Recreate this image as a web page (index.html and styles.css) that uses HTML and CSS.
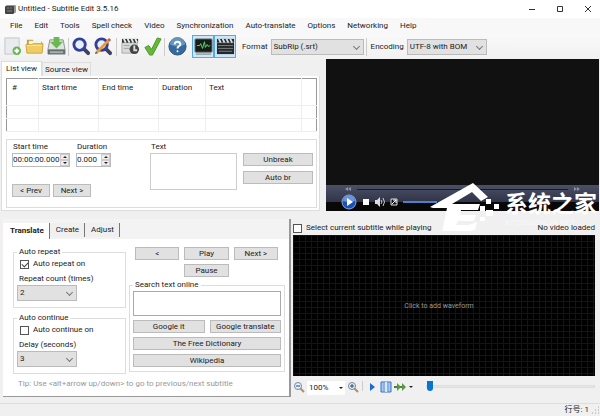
FILE: index.html
```html
<!DOCTYPE html>
<html lang="en">
<head>
  <meta charset="UTF-8" />
  <meta name="viewport" content="width=device-width, initial-scale=1" />
  <title>Untitled - Subtitle Edit 3.5.16</title>
  <link rel="stylesheet" href="styles.css">
</head>
<body>
  <header class="titlebar">
    <svg class="app-icon" viewBox="0 0 11 11"><rect x="1" y="1" width="10" height="8" rx="1" fill="#999"/><rect x="0" y="2" width="9" height="8" rx="1" fill="#444"/><path d="M2 4h2M5 4h2M2 7h5" stroke="#888"/></svg>
    <h1>Untitled - Subtitle Edit 3.5.16</h1>
    <div class="window-buttons">
      <button aria-label="Minimize"><svg viewBox="0 0 8 8"><path d="M1 4.5h6" /></svg></button>
      <button aria-label="Maximize"><svg viewBox="0 0 8 8"><path d="M1.5 1.5h5v5h-5z" /></svg></button>
      <button aria-label="Close"><svg viewBox="0 0 8 8"><path d="M1 1l6 6M7 1l-6 6" /></svg></button>
    </div>
  </header>

  <nav class="menu">
    <a href="#">File</a>
    <a href="#">Edit</a>
    <a href="#">Tools</a>
    <a href="#">Spell check</a>
    <a href="#">Video</a>
    <a href="#">Synchronization</a>
    <a href="#">Auto-translate</a>
    <a href="#">Options</a>
    <a href="#">Networking</a>
    <a href="#">Help</a>
  </nav>

  <div class="toolbar">
    <button class="tool" aria-label="New">
      <svg viewBox="0 0 20 20"><path d="M2 1h15v17H2z" fill="#e9ebee" stroke="#c3c6ca"/><circle cx="14.500" cy="14.500" r="4.500" fill="#65b651"/><path d="M14.500 12v5M12 14.500h5" stroke="#fff" stroke-width="2"/></svg>
    </button>
    <button class="tool" aria-label="Open">
      <svg viewBox="0 0 20 20"><path d="M2 16V3h6l2 2h8v11z" fill="#c89b3c"/><path d="M4 4h13v8H4z" fill="#f5f3e8"/><path d="M1 8h6l2-1h10l-1 10H2z" fill="#f0cd64" stroke="#cfa33f"/><path d="M2 9h15" stroke="#faeaa8"/></svg>
    </button>
    <button class="tool" aria-label="Save">
      <svg viewBox="0 0 20 20"><path d="M3 3h14l2 10v5H1v-5z" fill="#dfe3e2" stroke="#8d9292"/><path d="M1 13h18v5H1z" fill="#667072"/><path d="M3 15h14v2H3z" fill="#a8b1b1"/><path d="M7 0h6v5h4l-7 7-7-7h4z" fill="#67bb4c"/></svg>
    </button>
    <span class="divider"></span>
    <button class="tool" aria-label="Find">
      <svg viewBox="0 0 20 20"><path d="M12 12l5 5" stroke="#40405f" stroke-width="4" stroke-linecap="round"/><circle cx="8" cy="8" r="6" fill="#e7effc" stroke="#333f99" stroke-width="3"/></svg>
    </button>
    <button class="tool" aria-label="Replace">
      <svg viewBox="0 0 20 20"><path d="M12 12l5 5" stroke="#40405f" stroke-width="4" stroke-linecap="round"/><circle cx="8" cy="8" r="6" fill="#e7effc" stroke="#333f99" stroke-width="3"/><path d="M3 16L15 4" stroke="#ed9a31" stroke-width="3"/><path d="M15 4l2-2" stroke="#d35843" stroke-width="3"/><path d="M1 18l1-3 2 2z" fill="#554"/></svg>
    </button>
    <span class="divider wide-divider"></span>
    <button class="tool" aria-label="Visual sync">
      <svg viewBox="0 0 20 20"><path d="M1 6h16v11H1z" fill="#d7dcdb" stroke="#a6abad"/><path d="M1 2h17v4H1z" fill="#333"/><path d="M3 2l2 4M7 2l2 4M11 2l2 4M15 2l2 4" stroke="#e5eee6" stroke-width="2"/><path d="M3 9h6M3 12h6" stroke="#9da2a1"/><circle cx="14" cy="13" r="5" fill="#444"/><path d="M14 9v5h3" stroke="#ddd" stroke-width="2" fill="none"/></svg>
    </button>
    <button class="tool" aria-label="Spell check">
      <svg viewBox="0 0 20 20"><path d="M2 11l4-2 3 4 6-12 4 1-9 17H7z" fill="#66b838" stroke="#4c9828"/></svg>
    </button>
    <span class="divider"></span>
    <button class="tool" aria-label="Help">
      <svg viewBox="0 0 20 20"><circle cx="10" cy="10" r="9" fill="#346b9c" stroke="#24517a"/><path d="M2 8a8 8 0 0 1 16 0q-8 4-16 0z" fill="#6496bd"/><path d="M7 8q0-3 3-3t3 3q0 1-2 2-1 1-1 2" fill="none" stroke="#fff" stroke-width="2"/><circle cx="10" cy="15" r="1" fill="#fff"/></svg>
    </button>
    <div class="toggles">
      <button class="tool toggle" aria-label="Waveform">
        <svg viewBox="0 0 20 20"><rect x="1" y="2" width="18" height="14" rx="1" fill="#151d19" stroke="#777"/><path d="M3 9h3l1-2 2 5 2-7 1 6 2-3 1 2 2-1" fill="none" stroke="#60d56a"/><path d="M2 18h16" stroke="#777"/></svg>
      </button>
      <button class="tool toggle" aria-label="Video">
        <svg viewBox="0 0 20 20"><path d="M1 2h18v16H1z" fill="#24282a"/><path d="M1 6h18" stroke="#777"/><path d="M3 2l2 4M7 2l2 4M11 2l2 4M15 2l2 4" stroke="#ddd" stroke-width="2"/><path d="M2 9h16M2 12h16M3 15h14" stroke="#7d8487"/></svg>
      </button>
    </div>
    <label for="format">Format</label>
    <span class="select format"><select id="format"><option>SubRip (.srt)</option></select></span>
    <span class="divider encoding-divider"></span>
    <label for="encoding">Encoding</label>
    <span class="select encoding"><select id="encoding"><option>UTF-8 with BOM</option></select></span>
  </div>

  <main>
    <section class="top">
      <div class="list-panel">
        <div class="tabs">
          <button class="tab active">List view</button>
          <button class="tab">Source view</button>
        </div>
        <div class="tab-body">
          <table class="subtitles">
            <thead>
              <tr><th class="col-number">#</th><th class="col-time">Start time</th><th class="col-time">End time</th><th class="col-duration">Duration</th><th>Text</th><th class="col-end"></th></tr>
            </thead>
            <tbody>
              <tr><td></td><td></td><td></td><td></td><td></td><td></td></tr>
              <tr><td></td><td></td><td></td><td></td><td></td><td></td></tr>
            </tbody>
          </table>

          <div class="edit-box">
            <div class="times">
              <div class="time-fields">
                <div>
                  <label for="startTime">Start time</label>
                  <div class="spinner start"><input type="text" id="startTime" value="00:00:00.000"><span class="arrows"><button aria-label="Up"></button><button class="down" aria-label="Down"></button></span></div>
                </div>
                <div>
                  <label for="duration">Duration</label>
                  <div class="spinner duration"><input type="text" id="duration" value="0.000"><span class="arrows"><button aria-label="Up"></button><button class="down" aria-label="Down"></button></span></div>
                </div>
              </div>
              <div class="step-buttons">
                <button class="btn">&lt; Prev</button>
                <button class="btn">Next &gt;</button>
              </div>
            </div>
            <div class="text-field">
              <label for="text">Text</label>
              <textarea id="text"></textarea>
            </div>
            <div class="break-buttons">
              <button class="btn">Unbreak</button>
              <button class="btn">Auto br</button>
            </div>
          </div>
        </div>
      </div>

      <div class="video">
        <div class="player">
          <div class="seek">
            <svg viewBox="0 0 6 4"><path d="M3 0v4L0 2zM6 0v4L3 2z"/></svg>
            <i></i>
            <svg viewBox="0 0 6 4"><path d="M0 0v4l3-2zM3 0v4l3-2z"/></svg>
          </div>
          <div class="player-controls">
            <button aria-label="Play"><svg class="play" viewBox="0 0 16 16"><circle cx="8" cy="8" r="7" fill="#1852b7" stroke="#91a9d9"/><path d="M2 7a6 6 0 0 1 12 0q-6 2-12 0z" fill="#6994dd"/><path d="M6 4l6 4-6 4z" fill="#fff"/></svg></button>
            <button aria-label="Stop"><svg viewBox="0 0 10 10"><path d="M2 2h6v6H2z" fill="#fff"/></svg></button>
            <button aria-label="Mute"><svg viewBox="0 0 10 10"><path d="M0 3h2l3-3v10L2 7H0z" fill="#ddd"/><path d="M6 3q2 2 0 4M8 1q3 4 0 8" fill="none" stroke="#ccc"/></svg></button>
            <button aria-label="Full screen"><svg viewBox="0 0 10 10"><path d="M2 2h6v6H2z" fill="#111" stroke="#ddd"/><path d="M3 7l4-4M4 3h3v3" fill="none" stroke="#fff"/></svg></button>
            <span class="volume"></span>
          </div>
        </div>
      </div>
    </section>

    <section class="bottom">
      <div class="translate-panel">
        <div class="tabs flat">
          <button class="tab active">Translate</button>
          <button class="tab">Create</button>
          <button class="tab">Adjust</button>
        </div>
        <div class="translate-body">
          <div class="options">
            <fieldset>
              <legend>Auto repeat</legend>
              <label class="check"><input type="checkbox" checked>Auto repeat on</label>
              <label for="repeatCount">Repeat count (times)</label>
              <span class="select"><select id="repeatCount"><option>2</option></select></span>
            </fieldset>
            <fieldset>
              <legend>Auto continue</legend>
              <label class="check"><input type="checkbox">Auto continue on</label>
              <label for="delay">Delay (seconds)</label>
              <span class="select"><select id="delay"><option>3</option></select></span>
            </fieldset>
          </div>
          <div class="playback">
            <div class="play-buttons">
              <button class="btn">&lt;</button>
              <button class="btn">Play</button>
              <button class="btn">Next &gt;</button>
              <button class="btn pause">Pause</button>
            </div>
            <fieldset class="search">
              <legend><label for="search">Search text online</label></legend>
              <textarea id="search"></textarea>
              <div class="search-buttons">
                <button class="btn">Google it</button>
                <button class="btn">Google translate</button>
                <button class="btn wide">The Free Dictionary</button>
                <button class="btn wide">Wikipedia</button>
              </div>
            </fieldset>
          </div>
        </div>
        <p class="tip">Tip: Use &lt;alt+arrow up/down&gt; to go to previous/next subtitle</p>
      </div>

      <div class="wave-panel">
        <div class="wave-head">
          <label class="check"><input type="checkbox">Select current subtitle while playing</label>
          <span>No video loaded</span>
        </div>
        <div class="waveform">Click to add waveform</div>
        <div class="wave-controls">
          <button aria-label="Zoom out"><svg viewBox="0 0 12 12"><path d="M7 7l4 4" stroke="#bf8a4e" stroke-width="2"/><circle cx="5" cy="5" r="3.500" fill="#e5f3fa" stroke="#6a8ba8"/><path d="M3 5h4" stroke="#345"/></svg></button>
          <button class="zoom-value">100% <i></i></button>
          <button aria-label="Zoom in"><svg viewBox="0 0 12 12"><path d="M7 7l4 4" stroke="#bf8a4e" stroke-width="2"/><circle cx="5" cy="5" r="3.500" fill="#e5f3fa" stroke="#6a8ba8"/><path d="M3 5h4M5 3v4" stroke="#345"/></svg></button>
          <span class="small-divider"></span>
          <button aria-label="Play"><svg viewBox="0 0 12 12"><path d="M4 2l5 4-5 4z" fill="#1e68cf"/></svg></button>
          <button aria-label="Center"><svg viewBox="0 0 12 12"><path d="M1 1h10v10H1z" fill="#a9c8f2" stroke="#3972c3"/><path d="M4 1v10M8 1v10" stroke="#6f9bd8"/><path d="M6 1v10" stroke="#dbe8fa" stroke-width="2"/></svg></button>
          <button class="speed" aria-label="Speed"><svg viewBox="0 0 12 12"><path d="M0 6h5M5 6h5" stroke="#4c7f39" stroke-width="2"/><path d="M3 2l4 4-4 4zM8 2l4 4-4 4z" fill="#5c9546"/></svg><i></i></button>
          <input type="range" class="position" min="0" max="100" value="0" aria-label="Position">
        </div>
      </div>

      <div class="watermark">
        <svg viewBox="0 0 72 48"><path d="M0 24L43 0l15 14-7 4-9-9-20 12h28l-2 6H31l-1 5h16l-2 6H28l-2 4h13l8-3-2 8-12 2H12l5-24H3z" fill="#fff"/><path d="M50 23h5v5h-5zM56 16h5v5h-5zM56 27h7v6h-7zM64 21h5v5h-5zM50 34h5v4h-5z" fill="#fff"/></svg>
        <div><strong>系统之家</strong><small>XITONGZHIJIA.NET</small></div>
      </div>
    </section>
  </main>

  <footer class="statusbar">行号: 1<svg viewBox="0 0 8 8"><path d="M6 1h1M3 4h1M6 4h1M0 7h1M3 7h1M6 7h1" stroke="#aaa"/></svg></footer>
</body>
</html>
```
FILE: styles.css
```css
* {
  box-sizing: border-box;
}
body {
  margin: 0;
  min-height: 100vh;
  display: flex;
  flex-direction: column;
  background: #f0f0f0;
  color: #222;
  font: 8px/12px Roboto, "Noto Sans CJK SC", sans-serif;
}
button, input, select, textarea {
  font: inherit;
  color: inherit;
  margin: 0;
  padding: 0;
  border: 0;
  border-radius: 0;
  background: none;
  outline: none;
}
button {
  white-space: nowrap;
}
svg {
  display: block;
}
textarea {
  display: block;
  resize: none;
  background: #fff;
}
label {
  white-space: nowrap;
}

/* title and menu */
.titlebar {
  height: 18px;
  display: flex;
  align-items: center;
  background: #fff;
  padding: 0 8px 0 5px;
}
.titlebar h1 {
  margin: 0;
  font-size: 8px;
  font-weight: normal;
}
.app-icon {
  width: 11px;
  height: 11px;
  margin-right: 2px;
}
.window-buttons {
  display: flex;
  gap: 20px;
  margin-left: auto;
}
.window-buttons svg {
  width: 8px;
  height: 8px;
  fill: none;
  stroke: #333;
}
.menu {
  height: 16px;
  display: flex;
  align-items: center;
  gap: 12px;
  padding: 0 10px;
  background: #f8f8f8;
}
.menu a {
  color: inherit;
  text-decoration: none;
  white-space: nowrap;
}

/* toolbar */
.toolbar {
  height: 25px;
  display: flex;
  align-items: center;
  padding-left: 1px;
  background: linear-gradient(#f9f9f9, #f1f1f1);
}
.tool {
  width: 22px;
  height: 24px;
  display: grid;
  place-items: center;
  flex: none;
}
.tool svg {
  width: 19px;
  height: 19px;
}
.divider {
  width: 1px;
  height: 18px;
  margin: 0 1px;
  background: #ccc;
}
.wide-divider {
  margin: 0 2px;
}
.toggles {
  display: flex;
  margin: 0 6px 0 4px;
}
.toggle {
  height: 23px;
  border: 1px solid #55a9e5;
  background: #cce6fa;
}
.select {
  position: relative;
  display: block;
}
.select::after {
  content: "";
  position: absolute;
  right: 5px;
  top: 5px;
  width: 4px;
  height: 4px;
  border: solid #777;
  border-width: 0 1px 1px 0;
  transform: rotate(45deg);
  pointer-events: none;
}
select {
  appearance: none;
  display: block;
  width: 100%;
  height: 16px;
  padding-left: 2px;
  border: 1px solid #bbb;
  background: #e1e1e1;
}
.format {
  width: 93px;
  margin-left: 3px;
}
.encoding {
  width: 80px;
  margin-left: 3px;
}
.encoding-divider {
  margin: 0 4px 0 2px;
}

/* list view and video */
main {
  flex: 1;
  display: flex;
  flex-direction: column;
  gap: 8px;
}
.top {
  display: flex;
}
.list-panel {
  width: 54%;
  padding: 2px 4px 0 1px;
  flex: none;
}
.tabs {
  display: flex;
  align-items: flex-end;
}
.tab {
  height: 14px;
  padding: 0 2px;
  border: 1px solid #ddd;
  border-bottom: 0;
  background: #f0f0f0;
}
.tab.active {
  height: 15px;
  padding: 0 4px;
  background: #fff;
}
.tab-body {
  padding: 2px 2px 2px 4px;
  border: 1px solid #ddd;
  border-top: 0;
  background: #fff;
}
.subtitles {
  width: 100%;
  table-layout: fixed;
  border-collapse: collapse;
  border: 1px solid #999;
}
.subtitles th, .subtitles td {
  height: 13px;
  padding: 0 3px;
  border-right: 1px solid #eee;
  border-bottom: 1px solid #eee;
  font-weight: normal;
  text-align: left;
}
.subtitles th {
  height: 27px;
  padding-bottom: 8px;
  border-bottom-color: #eee;
}
.subtitles tr > :last-child {
  border-right: 0;
}
.subtitles .col-number {
  width: 32px;
  padding-left: 5px;
}
.col-time {
  width: 60px;
}
.col-duration {
  width: 47px;
}
.col-end {
  width: 15px;
}
.edit-box {
  height: 69px;
  display: flex;
  margin-top: 7px;
  padding: 0 3px 0 5px;
  border: 1px solid #ddd;
}
.times {
  flex: 1;
}
.time-fields {
  display: flex;
  gap: 6px;
}
.spinner {
  height: 14px;
  display: flex;
  border: 1px solid #bbb;
  background: #fff;
}
.spinner input {
  flex: 1;
  min-width: 0;
}
.spinner.start {
  width: 58px;
}
.spinner.duration {
  width: 35px;
}
.time-fields label, .text-field label {
  display: block;
  padding: 1px 0 0 1px;
}
.arrows {
  display: flex;
  flex-direction: column;
  width: 9px;
  background: #eee;
}
.arrows button {
  flex: 1;
  display: grid;
  place-items: center;
  border: 1px solid #ccc;
}
.arrows button::after {
  content: "";
  border: 2px solid transparent;
  border-top: 0;
  border-bottom-color: #222;
}
.arrows .down::after {
  border-top: 2px solid #222;
  border-bottom: 0;
}
.btn {
  height: 13px;
  border: 1px solid #bbb;
  background: #e1e1e1;
  line-height: 11px;
}
.step-buttons {
  display: flex;
  gap: 3px;
  margin-top: 17px;
}
.step-buttons .btn {
  width: 38px;
}
.text-field textarea {
  width: 87px;
  height: 37px;
  border: 1px solid #ccc;
}
.break-buttons {
  width: 70px;
  display: flex;
  flex-direction: column;
  gap: 5px;
  margin: 13px 0 0 6px;
}
.video {
  flex: 1;
  display: flex;
  flex-direction: column;
  justify-content: flex-end;
  margin: 0 1px 0 2px;
  background: #111;
}
.player {
  height: 26px;
  background: linear-gradient(#4b5066, #303449 17px, #080808 17px);
}
.seek {
  height: 8px;
  display: flex;
  align-items: center;
  gap: 6px;
  padding: 0 19px;
}
.seek svg {
  width: 6px;
  height: 4px;
  fill: #8c91a1;
}
.seek i {
  flex: 1;
  height: 1px;
  background: #171b2a;
}
.player-controls {
  height: 18px;
  display: flex;
  align-items: center;
  gap: 4px;
  padding-left: 15px;
}
.player-controls svg {
  width: 10px;
  height: 10px;
}
.player-controls .play {
  width: 16px;
  height: 16px;
}
.volume {
  width: 34px;
  height: 2px;
  background: #4d80cb;
}

/* translate panel */
.bottom {
  flex: 1;
  display: flex;
  position: relative;
}
.translate-panel {
  width: 288px;
  flex: none;
  margin: 0 2px 6px 3px;
  background: #fff;
  border: solid #999;
  border-width: 0 2px 1px 0;
}
.flat {
  height: 20px;
  padding-top: 4px;
  background: #f3f3f3;
  align-items: stretch;
}
.flat .tab, .flat .tab.active {
  height: 14px;
  padding: 0 5px 0 6px;
  border: 0;
  border-right: 1px solid #777;
}
.flat .tab.active {
  height: 16px;
  padding-left: 7px;
  font-weight: bold;
}
.translate-body {
  display: flex;
  gap: 3px;
  padding: 7px 4px 0 10px;
}
.options {
  width: 113px;
  display: flex;
  flex-direction: column;
  gap: 4px;
}
fieldset {
  margin: 0;
  padding: 0 3px 6px;
  border: 1px solid #ddd;
  min-width: 0;
}
legend {
  padding: 0 2px;
}
.check {
  display: flex;
  align-items: center;
  gap: 4px;
}
.check input {
  appearance: none;
  width: 9px;
  height: 9px;
  border: 1px solid #555;
  background: #fff;
  display: grid;
  place-items: center;
}
.check input:checked::after {
  content: "";
  width: 3px;
  height: 5px;
  border: solid #444;
  border-width: 0 1px 1px 0;
  transform: rotate(45deg);
}
.options .check {
  padding-left: 3px;
  margin-bottom: 3px;
}
.options label {
  padding-left: 2px;
}
.options .select {
  width: 60px;
}
.playback {
  flex: 1;
  min-width: 0;
}
.play-buttons {
  display: grid;
  grid-template-columns: repeat(3, 1fr);
  gap: 4px 5px;
  padding: 1px 7px 0 6px;
}
.pause {
  grid-column: 2;
}
.search {
  margin-top: 2px;
  padding: 0 3px 4px;
}
.search textarea {
  width: 100%;
  height: 25px;
  border: 1px solid #aaa;
}
.search-buttons {
  display: grid;
  grid-template-columns: 1fr 1fr;
  gap: 4px 5px;
  margin-top: 4px;
}
.wide {
  grid-column: span 2;
}
.tip {
  margin: 4px 0 0 15px;
  color: #999;
  white-space: nowrap;
}

/* waveform */
.wave-panel {
  flex: 1;
  min-width: 0;
  display: flex;
  flex-direction: column;
  margin-right: 5px;
}
.wave-head {
  height: 16px;
  display: flex;
  align-items: center;
  justify-content: space-between;
  padding-top: 2px;
  white-space: nowrap;
}
.waveform {
  flex: 1;
  display: grid;
  place-items: center;
  padding-right: 10px;
  color: #999;
  font-size: 7px;
  background: repeating-linear-gradient(90deg, #141414 0 1px, transparent 1px 6px), repeating-linear-gradient(#141414 0 1px, transparent 1px 6px), #000;
}
.wave-controls {
  height: 27px;
  display: flex;
  align-items: flex-start;
  gap: 2px;
  padding-top: 5px;
}
.wave-controls svg {
  width: 12px;
  height: 12px;
}
.wave-controls i {
  border: 2px solid transparent;
  border-top-color: #222;
  border-bottom: 0;
}
.zoom-value {
  width: 38px;
  height: 14px;
  display: flex;
  align-items: center;
  justify-content: space-between;
  padding: 0 2px;
  background: #fff;
}
.small-divider {
  width: 1px;
  height: 10px;
  margin: 0 1px;
  background: #ccc;
}
.speed {
  display: flex;
  align-items: center;
  gap: 3px;
  margin-right: 11px;
}
.position {
  appearance: none;
  flex: 1;
  min-width: 0;
  height: 10px;
}
.position::-webkit-slider-runnable-track {
  height: 3px;
  border: 1px solid #ddd;
  background: #e8e8e8;
}
.position::-webkit-slider-thumb {
  appearance: none;
  width: 6px;
  height: 10px;
  margin-top: -5px;
  background: #0875d1;
  border-radius: 0 0 3px 3px;
}

/* logo lying over the video and waveform panels */
.watermark {
  position: absolute;
  right: 3px;
  top: -36px;
  display: flex;
  gap: 3px;
  color: #fff;
  pointer-events: none;
}
.watermark svg {
  width: 72px;
  height: 48px;
}
.watermark strong, .watermark small {
  display: block;
}
.watermark strong {
  font: bold 23px/26px "Noto Sans CJK SC", sans-serif;
  margin-top: 6px;
}
.watermark small {
  font-size: 8px;
  line-height: 10px;
  margin-top: 3px;
  opacity: 0.5;
}
.statusbar {
  height: 13px;
  display: flex;
  align-items: center;
  justify-content: flex-end;
  gap: 3px;
  border-top: 1px solid #ddd;
}
.statusbar svg {
  width: 8px;
  height: 8px;
}
```
